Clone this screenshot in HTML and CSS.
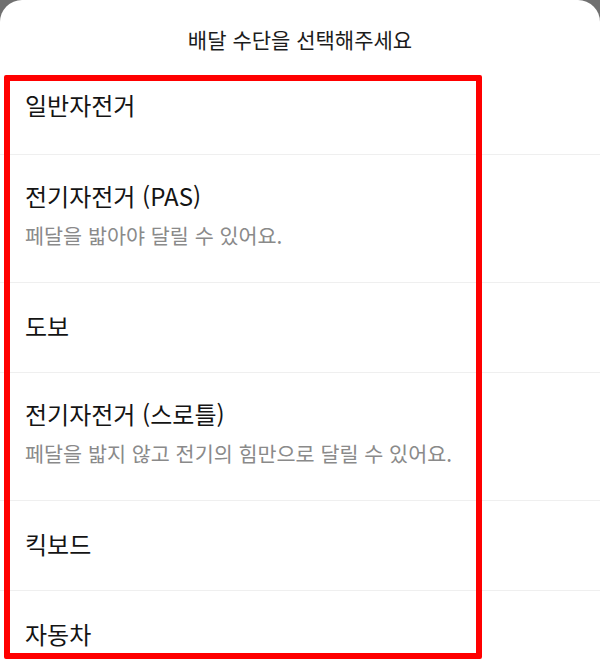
FILE: index.html
```html
<!DOCTYPE html>
<html lang="ko">
<head>
<meta charset="utf-8">
<title>배달 수단 선택</title>
<link rel="stylesheet" href="styles.css">
</head>
<body>
<div class="sheet">
  <div class="sheet-header">배달 수단을 선택해주세요</div>
  <ul class="option-list">
    <li class="option option-first"><span class="option-title">일반자전거</span></li>
    <li class="option option-desc">
      <span class="option-title">전기자전거 (PAS)</span>
      <span class="option-sub">페달을 밟아야 달릴 수 있어요.</span>
    </li>
    <li class="option"><span class="option-title">도보</span></li>
    <li class="option option-desc">
      <span class="option-title">전기자전거 (스로틀)</span>
      <span class="option-sub">페달을 밟지 않고 전기의 힘만으로 달릴 수 있어요.</span>
    </li>
    <li class="option"><span class="option-title">킥보드</span></li>
    <li class="option"><span class="option-title">자동차</span></li>
  </ul>
  <div class="highlight"></div>
</div>
</body>
</html>
```

FILE: styles.css
```css
html, body {
  margin: 0;
  padding: 0;
  background: #707070;
  height: 667px;
  overflow: hidden;
}
body {
  font-family: "Noto Sans CJK KR", "Noto Sans", sans-serif;
  color: #161616;
}
.sheet {
  position: relative;
  background: #ffffff;
  border-radius: 22px 22px 0 0;
  height: 667px;
  overflow: hidden;
}
.sheet-header {
  padding: 25px 0 12px;
  height: 28px;
  line-height: 28px;
  font-size: 21px;
  text-align: center;
  color: #1c1c1c;
}
.option-list {
  list-style: none;
  margin: 0;
  padding: 0;
}
.option {
  display: flex;
  flex-direction: column;
  justify-content: center;
  height: 85px;
  padding: 0 25px 4px;
  border-bottom: 1px solid #efefef;
  box-sizing: content-box;
}
.option-first {
  height: 79px;
  padding-bottom: 10px;
}
.option-desc {
  height: 127px;
  padding-bottom: 0;
  justify-content: flex-start;
}
.option-desc .option-title {
  margin-top: 26px;
}
.option-title {
  font-size: 24px;
  line-height: 30px;
  color: #141414;
}
.option-sub {
  margin-top: 10px;
  font-size: 20.7px;
  line-height: 28px;
  color: #8a8a8a;
}
.highlight {
  position: absolute;
  left: 4px;
  top: 75px;
  width: 466px;
  height: 572px;
  border: 6px solid #ff0000;
  border-radius: 2px;
  pointer-events: none;
}
```
